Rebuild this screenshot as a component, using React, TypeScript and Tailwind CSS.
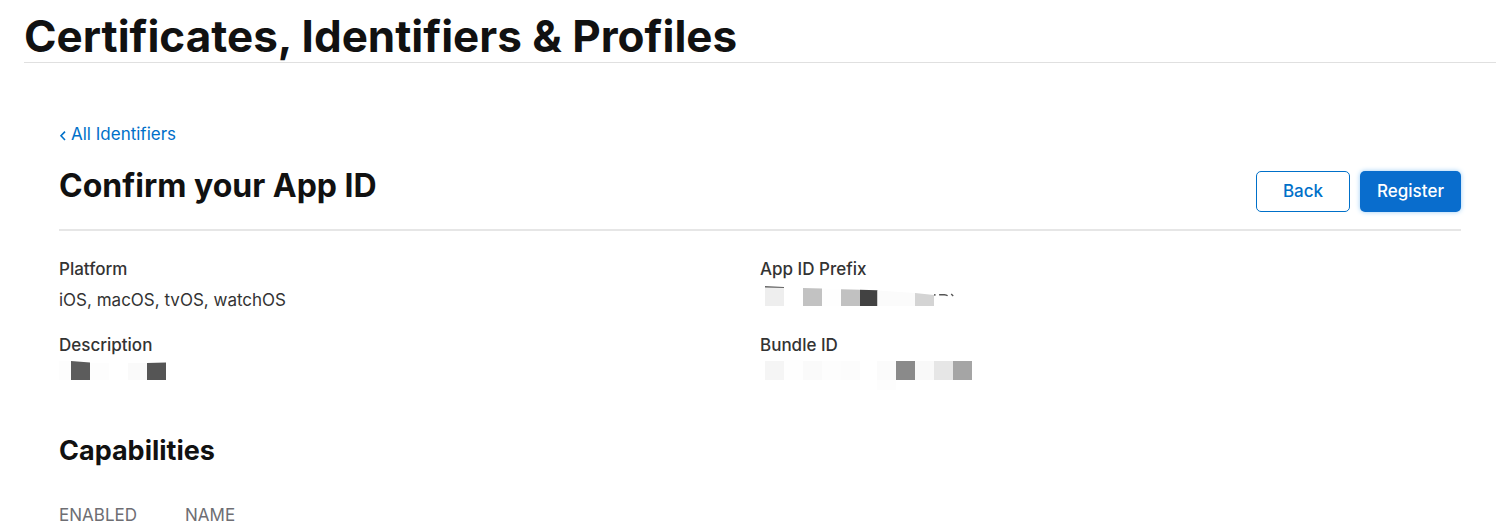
import type { ReactNode } from "react";

type Field = { label: string; value: ReactNode };

function RedactedDescription() {
  return (
    <svg role="img" aria-label="Hidden description" width="230" height="30" viewBox="0 5 230 30" className="block">
      <path d="M-3 9H12V28H-3Z" fill="#fdfdfd" />
      <path d="M12 9L31 10.5V28H12Z" fill="#5c5c5c" />
      <path d="M31 11H50V28H31Z" fill="#fdfdfd" />
      <path d="M69 11H88V28H69Z" fill="#fafafa" />
      <path d="M88 11L107 10.5V28H88Z" fill="#555555" />
    </svg>
  );
}

function RedactedPrefix() {
  return (
    <svg role="img" aria-label="Hidden prefix" width="230" height="30" viewBox="0 3 230 30" className="block">
      <path d="M5 9H24V28H5Z" fill="#eeeeee" />
      <path d="M5 8L24 9V10L5 9.5Z" fill="#666666" />
      <path d="M43 10L62 10.5V28H43Z" fill="#c2c2c2" />
      <path d="M62 11H81V28H62Z" fill="#fefefe" />
      <path d="M81 11.2L100 11.7V28H81Z" fill="#c1c1c1" />
      <path d="M100 11.7L117.5 12.3V28H100Z" fill="#424242" />
      <path d="M117.5 12.5L155 15V28H117.5Z" fill="#fbfbfb" />
      <path d="M155 15L174 17V28H155Z" fill="#d4d4d4" />
      <path d="M174.8 16V17.8M179.8 17.4V16.7H184.5Q186.5 16.9 187.6 17.8M191.2 16L193.2 18" fill="none" stroke="#555555" strokeWidth="1.4" />
    </svg>
  );
}

function RedactedBundle() {
  return (
    <svg role="img" aria-label="Hidden bundle identifier" width="230" height="42" viewBox="0 5 230 42" className="block">
      <path d="M5 9H24V28H5Z" fill="#f5f5f5" />
      <path d="M24 8H43V28H24Z" fill="#fefefe" />
      <path d="M43 9H62V28H43Z" fill="#fafafa" />
      <path d="M62 9H81V28H62Z" fill="#fdfdfd" />
      <path d="M81 9H100V28H81Z" fill="#fcfcfc" />
      <path d="M117 9H136V28H117Z" fill="#fbfbfb" />
      <path d="M117 28H136V38H117Z" fill="#fdfdfd" />
      <path d="M136 9H155V28H136Z" fill="#8a8a8a" />
      <path d="M155 9H174V28H155Z" fill="#f9f9f9" />
      <path d="M174 9H193V28H174Z" fill="#e6e6e6" />
      <path d="M193 9H212V28H193Z" fill="#a5a5a5" />
    </svg>
  );
}

const fields: Field[] = [
  { label: "Platform", value: <span className="block pt-[7px]">iOS, macOS, tvOS, watchOS</span> },
  { label: "App ID Prefix", value: <RedactedPrefix /> },
  { label: "Description", value: <RedactedDescription /> },
  { label: "Bundle ID", value: <RedactedBundle /> },
];

export default function App() {
  return (
    <div className="bg-white pl-6 pr-1 font-['Inter','Liberation_Sans',sans-serif] text-[17px] leading-6 text-[#333333]">
      <header className="border-b border-[#e0e0e0] pt-[10px]">
        <h1 className="text-[44px] leading-[52px] font-bold text-[#111111]">
          Certificates, Identifiers &amp; Profiles
        </h1>
      </header>

      <main className="px-[35px] pt-[59px]">
        <a href="#identifiers" className="flex w-fit items-center gap-1 text-[#0070c9] hover:underline">
          <svg aria-hidden="true" width="8" height="12" viewBox="0 0 8 12" fill="none" stroke="currentColor" strokeWidth="1.6" className="mt-1">
            <path d="M6 1.6L2 5.8L6 10" />
          </svg>
          All Identifiers
        </a>

        <div className="mt-5 flex items-start justify-between border-b-2 border-[#e6e6e6] pb-[17px]">
          <h2 className="text-[32px] leading-10 font-bold text-[#111111]">Confirm your App ID</h2>
          <div className="flex gap-[10px] pt-[5px] font-medium">
            <button type="button" className="h-[41px] w-[94px] rounded-[5px] border border-[#0070c9] bg-white pb-[2px] text-[#0070c9]">
              Back
            </button>
            <button type="button" className="h-[41px] w-[101px] rounded-[5px] bg-[#096dcd] pb-[2px] text-white shadow-[0_0_5px_#99ccf5]">
              Register
            </button>
          </div>
        </div>

        <dl className="grid grid-cols-2 pt-[26px]">
          {fields.map((field) => (
            <div key={field.label} className="h-[76px]">
              <dt className="font-medium">{field.label}</dt>
              <dd>{field.value}</dd>
            </div>
          ))}
        </dl>

        <section className="pt-[26px]">
          <h3 className="text-[27px] leading-8 font-bold text-[#111111]">Capabilities</h3>
          <table className="mt-[38px] w-full text-left leading-5 text-[#6e6e73]">
            <thead>
              <tr>
                <th scope="col" className="w-[126px] font-normal">ENABLED</th>
                <th scope="col" className="font-normal">NAME</th>
              </tr>
            </thead>
          </table>
        </section>
      </main>
    </div>
  );
}
